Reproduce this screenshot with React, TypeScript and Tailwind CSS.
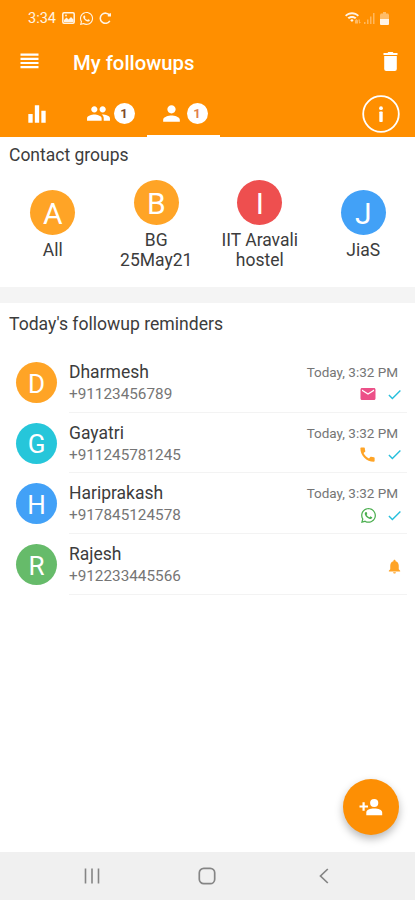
import { MdCall, MdCheck, MdEmail, MdEqualizer, MdNotifications, MdPeople, MdPerson } from 'react-icons/md';
import { FaWhatsapp } from 'react-icons/fa';
import { clsx } from 'clsx';

type Channel = 'email' | 'call' | 'whatsapp';

type Reminder = {
  name: string;
  phone: string;
  color: string;
  time?: string;
  channel?: Channel;
};

const groups = [
  { letter: 'A', name: 'All', color: 'bg-[#ffa426]' },
  { letter: 'B', name: 'BG 25May21', color: 'bg-[#ffa426]' },
  { letter: 'I', name: 'IIT Aravali hostel', color: 'bg-[#ee4f4f]' },
  { letter: 'J', name: 'JiaS', color: 'bg-[#42a1f7]' },
];

const reminders: Reminder[] = [
  { name: 'Dharmesh', phone: '+91123456789', color: 'bg-[#ffa426]', time: 'Today, 3:32 PM', channel: 'email' },
  { name: 'Gayatri', phone: '+911245781245', color: 'bg-[#26c6da]', time: 'Today, 3:32 PM', channel: 'call' },
  { name: 'Hariprakash', phone: '+917845124578', color: 'bg-[#42a1f7]', time: 'Today, 3:32 PM', channel: 'whatsapp' },
  { name: 'Rajesh', phone: '+912233445566', color: 'bg-[#66bb6a]' },
];

const channelIcons = {
  email: <MdEmail className="w-[18px] h-[18px] text-[#ec5088]" />,
  call: <MdCall className="w-[19px] h-[19px] text-[#ffa426]" />,
  whatsapp: <FaWhatsapp className="w-[17px] h-[17px] text-[#4caf50]" />,
};

function StatusBar() {
  return (
    <div className="h-[36px] pt-[2px] pl-7 pr-[26px] flex items-center justify-between text-white/90">
      <div className="flex items-center">
        <span className="w-[34px] text-[14.5px] leading-4">3:34</span>
        <svg className="w-[13px] h-3 -mt-[2px]" viewBox="0 0 13 12" fill="none">
          <rect x="0.8" y="0.8" width="11.4" height="10.4" rx="1.2" stroke="currentColor" strokeWidth="1.5" />
          <path d="M2 10V8l2.5-2.5L6.5 7.5 9 5l2.5 2.5V10z" fill="currentColor" />
          <circle cx="4" cy="3.5" r="0.9" fill="currentColor" />
        </svg>
        <FaWhatsapp className="w-[15px] h-[15px] ml-[4px] -mt-[2px]" />
        <svg className="w-3 h-3 ml-[5px] -mt-[2px]" viewBox="0 0 12 12" fill="none" stroke="currentColor" strokeWidth="1.6">
          <path d="M10.8 8.8A5.1 5.1 0 1 1 10.6 3.4M11.2 1.3V3.8H8.8" />
        </svg>
      </div>
      <div className="flex items-center -mt-[2px]">
        <svg className="w-[17px] h-3" viewBox="0 0 17 12" fill="currentColor">
          <path d="M0 3.2C4 -0.7 10 -0.7 14 3.2L12.7 4.6C9.5 1.6 4.5 1.6 1.3 4.6z" />
          <path d="M2.5 5.6C5 3.5 9 3.5 11.5 5.6L10 7.1C8.3 5.6 5.7 5.6 4 7.1zM5.2 8.2L7 6.9L8.6 8.2L7 10z" />
          <path opacity="0.45" d="M10 11.5V8.5l1.5-1.5 1.5 1.5v3zM13.5 7.5h1.3v2.5h1.2l-1.8 1.8z" />
        </svg>
        <svg className="w-[11px] h-3 ml-[2px]" viewBox="0 0 11 12" fill="currentColor" opacity="0.4">
          <path d="M0 10h1.5v2H0zM3 7.5h1.5V12H3zM6 4.5h1.5V12H6zM9 1h1.5v11H9z" />
        </svg>
        <svg className="w-[9px] h-[13px] ml-[5px]" viewBox="0 0 9 13" fill="currentColor">
          <path opacity="0.45" d="M3 0h3v1.5h2.2L9 3v4H0V3l0.8-1.5H3z" />
          <path d="M0 7h9v5a1 1 0 0 1-1 1H1a1 1 0 0 1-1-1z" />
        </svg>
      </div>
    </div>
  );
}

function Badge({ className }: { className: string }) {
  return (
    <span className={clsx('w-[21px] h-[21px] pt-px rounded-full bg-white flex items-center justify-center text-[13px] font-bold', className)}>
      1
    </span>
  );
}

function Header() {
  return (
    <header className="h-[137px] bg-[#ff8f00] text-white flex flex-col">
      <StatusBar />
      <div className="h-[51px] flex items-center pl-5 pr-4">
        <svg className="w-[19px] h-4 -mt-px" viewBox="0 0 19 16" fill="currentColor">
          <path d="M0.5 0.5h18v2.2h-18zM0.5 4.7h18v2.2h-18zM0.5 8.9h18v2.2h-18zM0.5 13.1h18v2.2h-18z" />
        </svg>
        <h1 className="ml-[34px] mt-[2px] flex-1 text-[20.3px] leading-6 font-medium">My followups</h1>
        <svg className="w-[15px] h-[19px] mr-px -mt-px" viewBox="0 0 15 19" fill="currentColor">
          <path d="M0.5 1H4.5L5.3 0H9.7L10.5 1H14.5V3H0.5zM1.2 4H13.8V17a2 2 0 0 1-2 2H3.2a2 2 0 0 1-2-2z" />
        </svg>
      </div>
      <div className="h-[50px] flex">
        <div className="w-[73px] pt-[3px] flex items-center justify-center">
          <MdEqualizer className="w-[26px] h-[26px]" />
        </div>
        <div className="w-[74px] pt-[3px] flex items-center justify-center gap-[3px]">
          <MdPeople className="w-[25px] h-[25px]" />
          <Badge className="text-[#7d4a28]" />
        </div>
        <div className="w-[73px] pt-[5px] pr-px flex items-center justify-center gap-[3px] border-b-2 border-white">
          <MdPerson className="w-[25px] h-[25px]" />
          <Badge className="text-[#e07f4c]" />
        </div>
        <div className="flex-1 pt-[3px] flex items-center justify-end pr-[15px]">
          <svg className="w-[38px] h-[38px]" viewBox="0 0 38 38">
            <circle cx="19" cy="19" r="17.8" fill="none" stroke="currentColor" strokeWidth="1.8" />
            <circle cx="19" cy="13.2" r="1.9" fill="currentColor" />
            <rect x="17.3" y="16.5" width="3.4" height="10.5" rx="0.8" fill="currentColor" />
          </svg>
        </div>
      </div>
    </header>
  );
}

function ContactGroups() {
  return (
    <section className="h-[150px] flex flex-col">
      <h2 className="pl-[9px] pt-[7px] text-[17.5px] leading-[22px]">Contact groups</h2>
      <div className="flex-1 pb-[3px] pl-px grid grid-cols-4 items-center">
        {groups.map((g) => (
          <div key={g.letter} className="flex flex-col items-center">
            <div className={clsx('w-[45px] h-[45px] rounded-full flex items-center justify-center text-white text-[30px] leading-none pt-[3px]', g.color)}>
              {g.letter}
            </div>
            <span className="mt-[5px] w-[84px] text-center text-[17.5px] leading-[20.5px]">{g.name}</span>
          </div>
        ))}
      </div>
    </section>
  );
}

function Reminders() {
  return (
    <section className="flex-1">
      <h2 className="pl-[9px] pt-[10px] h-[49px] text-[17.6px] leading-[22px]">Today's followup reminders</h2>
      {reminders.map((r) => (
        <div key={r.name} className="h-[60.7px] pl-4 flex">
          <div className={clsx('mt-[10px] w-[41px] h-[41px] shrink-0 rounded-full flex items-center justify-center text-white text-[26px] leading-none pt-[2px]', r.color)}>
            {r.name[0]}
          </div>
          <div className="flex-1 ml-3 mr-2 pr-[9px] pt-[9px] flex justify-between border-b border-[#f3f3f3]">
            <div>
              <p className="text-[17.5px] leading-[22px]">{r.name}</p>
              <p className="text-[15.3px] leading-[23px] text-[#757575]">{r.phone}</p>
            </div>
            {r.channel ? (
              <div className="flex flex-col items-end">
                <p className="h-[24px] text-[13.5px] leading-[22px] text-[#757575]">{r.time}</p>
                <div className="h-[18px] flex items-center gap-[9px]">
                  {channelIcons[r.channel]}
                  <MdCheck className="w-[17px] h-[17px] -mr-[5px] text-[#26bfdc]" />
                </div>
              </div>
            ) : (
              <MdNotifications className="w-[17px] h-[17px] mt-[15px] -mr-[5px] text-[#ffa426]" />
            )}
          </div>
        </div>
      ))}
    </section>
  );
}

function NavBar() {
  return (
    <nav className="h-12 bg-[#f0f0f0] flex items-center text-[#858585]">
      <svg className="w-4 h-4 ml-[84px]" viewBox="0 0 16 16" stroke="currentColor" strokeWidth="1.6">
        <path d="M1.5 0.5v15M8 0.5v15M14.5 0.5v15" />
      </svg>
      <svg className="w-[18px] h-[18px] ml-[98px]" viewBox="0 0 18 18" fill="none" stroke="currentColor" strokeWidth="1.7">
        <rect x="1.3" y="1.3" width="15.4" height="15.4" rx="4.5" />
      </svg>
      <svg className="w-[10px] h-4 ml-[103px]" viewBox="0 0 10 16" fill="none" stroke="currentColor" strokeWidth="1.7">
        <path d="M8.8 1L1.5 8L8.8 15" />
      </svg>
    </nav>
  );
}

export default function App() {
  return (
    <div className="relative w-[415px] h-[900px] overflow-hidden bg-white flex flex-col font-['Roboto',sans-serif] text-[#3c3c3c]">
      <Header />
      <ContactGroups />
      <div className="h-4 bg-[#f4f4f4]" />
      <Reminders />
      <NavBar />
      <button className="absolute right-4 bottom-[65px] w-14 h-14 rounded-full bg-[#fd8f04] text-white flex items-center justify-center shadow-[0_4px_8px_rgba(0,0,0,0.28)]">
        <svg className="w-6 h-[18px]" viewBox="0 0 24 18" fill="currentColor">
          <circle cx="15.2" cy="5" r="4.1" />
          <path d="M7.3 17.2V14.5C7.3 11.8 11 10.6 15.2 10.6S23.2 11.8 23.2 14.5V17.2zM3.5 4.3h2.2v3.2H9v2.1H5.7v3.2H3.5V9.6H0.5V7.5h3z" />
        </svg>
      </button>
    </div>
  );
}
